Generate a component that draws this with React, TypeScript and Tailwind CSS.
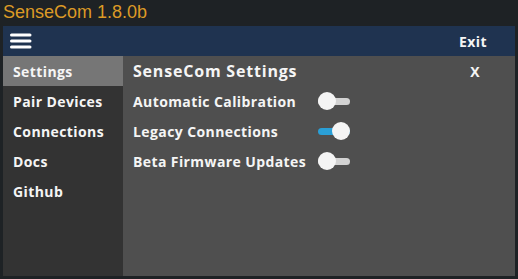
import React from "react";

function Toggle({ on }: { on: boolean }) {
  return (
    <div className="relative w-[32px] h-[18px] flex items-center">
      <div className={`h-[7px] w-full rounded-full ${on ? "bg-[#2a9fd6]" : "bg-[#d2d2d2]"}`} />
      <div
        className={`absolute top-0 w-[18px] h-[18px] rounded-full bg-[#f4f4f4] ${on ? "right-0" : "left-0"}`}
      />
    </div>
  );
}

export default function App() {
  const side = ["Pair Devices", "Connections", "Docs", "Github"];
  const rows: [string, boolean][] = [
    ["Automatic Calibration", false],
    ["Legacy Connections", true],
    ["Beta Firmware Updates", false],
  ];
  return (
    <div className="w-[518px] h-[279px] bg-[#1e2225] flex flex-col px-[3px] pb-[3px]">
      <div
        className="h-[26px] text-[18px] leading-[24px] text-[#dc9a26]"
        style={{ fontFamily: '"Liberation Sans", Arial, sans-serif' }}
      >
        SenseCom 1.8.0b
      </div>
      <div
        className="flex-1 flex flex-col font-bold text-[14px] tracking-[0.4px] text-[#f5f5f5]"
        style={{ fontFamily: '"Open Sans", "Noto Sans", sans-serif' }}
      >
        <div className="h-[30px] bg-[#1f3350] flex items-center justify-between pl-[7px] pr-[28px]">
          <svg width="22" height="16" viewBox="0 0 22 16">
            <g stroke="#ffffff" strokeWidth="3" strokeLinecap="round">
              <line x1="1.5" y1="2" x2="20" y2="2" />
              <line x1="1.5" y1="8" x2="20" y2="8" />
              <line x1="1.5" y1="14" x2="20" y2="14" />
            </g>
          </svg>
          <span>Exit</span>
        </div>
        <div className="flex-1 flex">
          <div className="w-[120px] bg-[#333333] flex flex-col">
            <div className="h-[30px] bg-[#767676] flex items-center pl-[10px]">Settings</div>
            {side.map((s) => (
              <div key={s} className="h-[30px] flex items-center pl-[10px]">
                {s}
              </div>
            ))}
          </div>
          <div className="flex-1 bg-[#4f4f4f] flex flex-col pl-[10px] pr-[35px]">
            <div className="h-[30px] flex items-center justify-between">
              <span className="text-[16px] tracking-[0.8px]">SenseCom Settings</span>
              <span>X</span>
            </div>
            {rows.map(([label, on]) => (
              <div key={label} className="h-[30px] flex items-center">
                <span className="w-[185px]">{label}</span>
                <Toggle on={on} />
              </div>
            ))}
          </div>
        </div>
      </div>
    </div>
  );
}
